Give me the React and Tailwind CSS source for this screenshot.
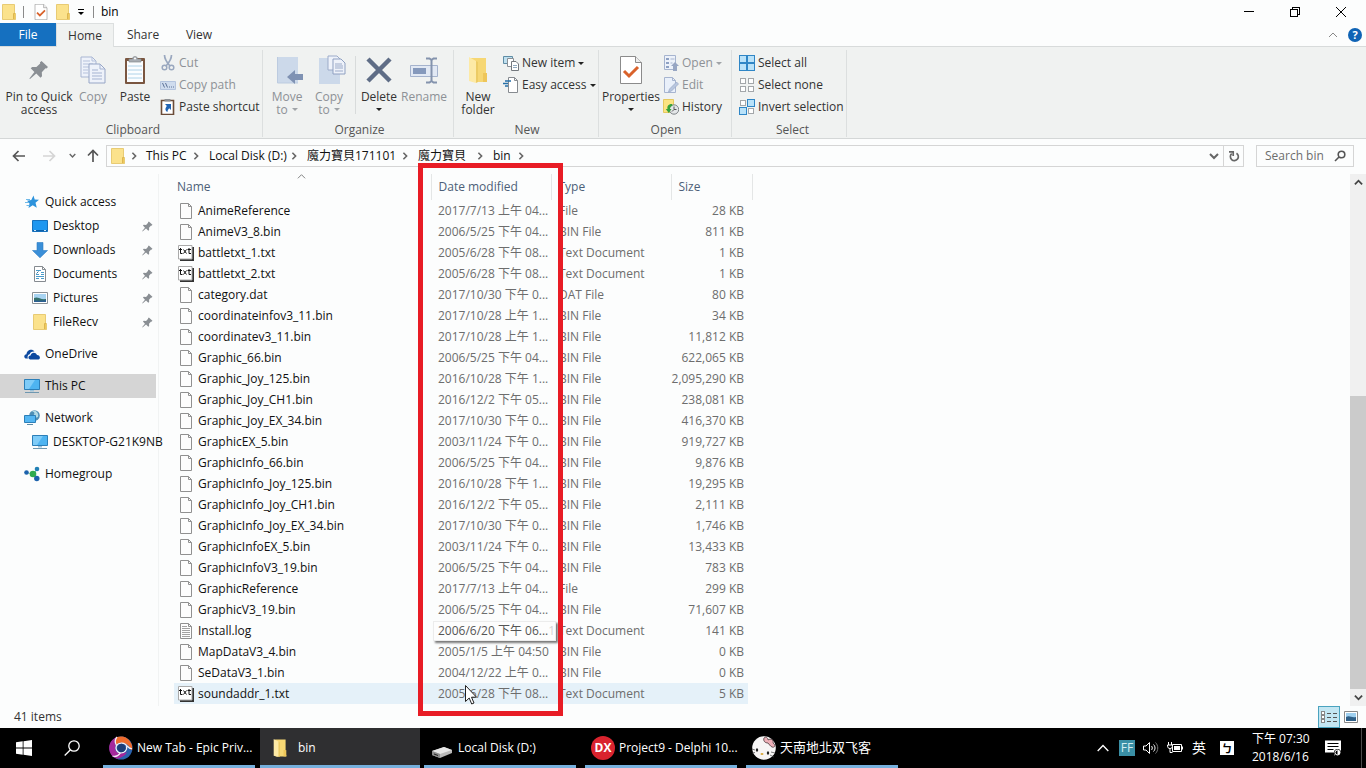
import React from "react";

const FONT = "font-['Open_Sans','Noto_Sans_CJK_TC',sans-serif]";

/* ---------- icons ---------- */

const FolderIcon = ({ className = "w-4 h-4" }) => (
  <svg viewBox="0 0 16 16" className={`shrink-0 ${className}`}>
    <path d="M1.500 .5h12v9h1v6h-13z" fill="#fbe28c" />
    <path d="M12.500 9.500h2v6h-2z" fill="#efc95c" />
    <path d="M1.500 .5h12v9h1v6h-13z" fill="none" stroke="#e8cb74" />
    <path d="M12.500 15v-5.500h1.500" fill="none" stroke="#dcb650" />
  </svg>
);

const OpenFolderIcon = ({ className }) => (
  <svg viewBox="0 0 20 28" className={`shrink-0 ${className}`}>
    <path d="M3 2h15v21l1 1v2H4z" fill="#f6d774" />
    <path d="M15 17h4v9h-4z" fill="#eec65a" />
    <path d="M1 1l7 4v22l-7-2z" fill="#fdeaa6" />
    <path d="M8 5v22l2-1V6z" fill="#eccb64" />
  </svg>
);

const CheckPageIcon = ({ className = "w-4 h-4" }) => (
  <svg viewBox="0 0 22 28" className={`shrink-0 ${className}`}>
    <path d="M.5 .5h15l6 6v21H.5z" fill="#fff" stroke="#8b8b8b" />
    <path d="M15.500 .5v6h6" fill="#eee" stroke="#8b8b8b" />
    <path d="M4 15l5 5L18 11" fill="none" stroke="#d9622b" strokeWidth="3" />
  </svg>
);

const PinIcon = ({ className }) => (
  <svg viewBox="0 0 20 20" className={`shrink-0 ${className}`} fill="#8a8f94">
    <path d="M12.500 1l6.500 6-1.500 1.500-1-.3-3.700 4 .2 4-1.500 1.500-4.200-4.100L1 19l-.600-.600 5-6.300L1.700 8.300 3.200 7l4.200.1 3.800-3.700-.3-1z" />
  </svg>
);

const CopyIcon = ({ className }) => (
  <svg viewBox="0 0 26 28" className={`shrink-0 ${className}`}>
    <path d="M1 1h11l4 4v16H1z" fill="#eef2fa" stroke="#a9b6d2" />
    <path d="M12 1v4h4M3 5h7M3 8h10M3 11h10M3 14h5M3 17h5" stroke="#b5c1db" fill="none" />
    <path d="M9 8h11l5 5v14H9z" fill="#eef2fa" stroke="#97a6c6" />
    <path d="M20 8v5h5M12 14h6M12 17h10M12 20h10M12 23h10" stroke="#a5b3d1" fill="none" />
  </svg>
);

const PasteIcon = ({ className }) => (
  <svg viewBox="0 0 22 30" className={`shrink-0 ${className}`}>
    <rect x="1" y="3" width="20" height="26" rx="1" fill="#7a5640" />
    <rect x="3" y="6" width="16" height="21" fill="#fbfdff" />
    <path d="M4 11h14M4 15h14M4 19h14M4 23h14" stroke="#aed2e8" />
    <path d="M5 7V4h3.500a2.500 2.500 0 0 1 5 0H17v3z" fill="#a8adb3" stroke="#85898e" strokeWidth=".7" />
    <circle cx="11" cy="3.500" r="1" fill="#fff" />
  </svg>
);

const CutIcon = () => (
  <svg viewBox="0 0 16 16" className="w-4 h-4 shrink-0" fill="none" stroke="#9aa8bf">
    <path d="M4.500 0c0 4 1.500 6.500 5.500 11M11.500 0c0 4-1.500 6.500-5.500 11" strokeWidth="1.700" />
    <circle cx="4.500" cy="12.500" r="2.300" strokeWidth="1.500" />
    <circle cx="11.500" cy="12.500" r="2.300" strokeWidth="1.500" />
  </svg>
);

const CopyPathIcon = () => (
  <svg viewBox="0 0 16 16" className="w-4 h-4 shrink-0">
    <path d="M.5 4.500h15v8H.5z" fill="#cfdcee" stroke="#b4c4de" />
    <path d="M2.500 6l2 4.500M5.500 6l2 4.500" stroke="#5d7298" />
    <path d="M9 10h1M11 10h1M13 10h1" stroke="#5d7298" />
  </svg>
);

const PasteShortcutIcon = () => (
  <svg viewBox="0 0 16 16" className="w-4 h-4 shrink-0">
    <path d="M1.500 1.500h12v14h-12z" fill="#fff" stroke="#6b4c38" strokeWidth="1.600" />
    <path d="M4.500 0h6v2.500h-6z" fill="#8c9095" />
    <path d="M5 5h6v6L9.200 9.200C8 10.500 7.500 11.500 7.500 13 4.800 11.500 5 9 6.900 6.900z" fill="#1f64b4" />
  </svg>
);

const MoveToIcon = ({ className }) => (
  <svg viewBox="-3 0 28 30" className={`shrink-0 overflow-visible ${className}`}>
    <path d="M1 2h21v26H1z" fill="#ccd9ea" />
    <path d="M1.500 2v26H22" stroke="#bccbe0" fill="none" />
    <path d="M11 22l8-7v4h8v6h-8v4z" fill="#7f92b3" />
  </svg>
);

const CopyToIcon = ({ className }) => (
  <svg viewBox="-3 0 28 30" className={`shrink-0 overflow-visible ${className}`}>
    <path d="M1 3h21v26H1z" fill="#ccd9ea" />
    <path d="M10 1h9l3 3v11H10z" fill="#eef2fa" stroke="#9cabc9" />
    <path d="M15 4h8l4 4v11H15z" fill="#eef2fa" stroke="#8fa0c1" />
    <path d="M17 9h7M17 11h8M17 13h8M17 16h8" stroke="#9cabc9" />
  </svg>
);

const DeleteIcon = ({ className }) => (
  <svg viewBox="0 0 28 28" className={`shrink-0 ${className}`}>
    <path d="M3 3l22 22M25 3L3 25" stroke="#5f6d86" strokeWidth="4.500" />
  </svg>
);

const RenameIcon = ({ className }) => (
  <svg viewBox="0 0 30 28" className={`shrink-0 ${className}`}>
    <path d="M1.500 9.500h27v11h-27z" fill="#e2e9f4" stroke="#a5b3cd" />
    <path d="M4 12h13v6H4z" fill="#8599bc" />
    <path d="M17 2.500h3.500l2 1.500 2-1.500H28M22.500 4v21M17 26.500h3.500l2-1.500 2 1.500H28" stroke="#8493ad" strokeWidth="2" fill="none" />
  </svg>
);

const NewItemIcon = () => (
  <svg viewBox="0 0 16 16" className="w-4 h-4 shrink-0">
    <path d="M.5 1.500h9v7h-9z" fill="#bfe0ef" stroke="#5f8da5" />
    <path d="M4.500 3.500h6v8h-6z" fill="#fff" stroke="#8a9096" />
    <path d="M8.500 6.500h4.500l2.500 2.500v6.500h-7z" fill="#fff" stroke="#74797e" />
    <path d="M10 10.500h4M10 12.500h4" stroke="#8fa9bd" />
  </svg>
);

const EasyAccessIcon = () => (
  <svg viewBox="0 0 16 16" className="w-4 h-4 shrink-0">
    <path d="M5.500 .5h6l3 3v12h-9z" fill="#fff" stroke="#868b90" />
    <path d="M11.500 .5v3h3" fill="none" stroke="#868b90" />
    <path d="M2 4h6M0 6.500h5M2 9h3" stroke="#246fa8" strokeWidth="1.500" />
  </svg>
);

const OpenIcon = () => (
  <svg viewBox="0 0 16 16" className="w-4 h-4 shrink-0">
    <path d="M1.500 .5h11v14h-11z" fill="#edf2fa" stroke="#a6b4cf" />
    <path d="M3 3h3v2H3zM3 7h3v2H3zM3 11h3v2H3z" fill="#8ea1c3" />
    <path d="M7.500 4h4M7.500 8h2" stroke="#a6b4cf" />
    <path d="M12 7l4 4h-2v5h-4v-5H8z" fill="#97a6c3" />
  </svg>
);

const EditIcon = () => (
  <svg viewBox="0 0 16 16" className="w-4 h-4 shrink-0">
    <path d="M1.500 .5h8l3 3v12h-11z" fill="#e9f0fa" stroke="#a6b4cf" />
    <path d="M9.500 .5v3h3" fill="none" stroke="#a6b4cf" />
    <path d="M13.500 5l2 2-7 7-3 1 1-3z" fill="#b8c6de" stroke="#98a8c5" strokeWidth=".7" />
  </svg>
);

const HistoryIcon = () => (
  <svg viewBox="0 0 16 16" className="w-4 h-4 shrink-0">
    <path d="M.5 .5h10v13H.5z" fill="#fbe382" stroke="#e5c95e" />
    <circle cx="11" cy="10.500" r="4.700" fill="#e3e6e8" stroke="#7e8488" />
    <path d="M11 7.500v3h2.500M9 12.500l2-2" stroke="#555" fill="none" />
    <path d="M9 5C5 5 4 7.500 4.500 10H2.800l3 4 2.700-4H7c0-1.500.5-2.800 2.500-3z" fill="#35a23b" />
  </svg>
);

const SelectIcon = ({ filled }) => (
  <svg viewBox="0 0 16 16" className="w-4 h-4 shrink-0">
    {[[1, 1], [9, 1], [1, 9], [9, 9]].map(([x, y], i) => (
      <rect
        key={i}
        x={x - 0.5 + (filled[i] ? 0 : 1)}
        y={y - 0.5 + (filled[i] ? 0 : 1)}
        width={filled[i] ? 7 : 5}
        height={filled[i] ? 7 : 5}
        fill={filled[i] ? "#b9e2f9" : "#fff"}
        stroke={filled[i] ? "#2f86c6" : "#a3a7aa"}
      />
    ))}
  </svg>
);

const Caret = ({ className = "text-[#222]" }) => (
  <svg viewBox="0 0 6 3" className={`w-[6px] h-[3px] shrink-0 ${className}`}>
    <path d="M0 0h6L3 3z" fill="currentColor" />
  </svg>
);

const Chevron = ({ d, className }) => (
  <svg viewBox="0 0 10 10" className={`shrink-0 ${className}`} fill="none" stroke="currentColor">
    <path d={d} />
  </svg>
);
const RIGHT = "M3 1l4 4-4 4";
const DOWN = "M1 3l4 4 4-4";
const UP = "M1 7l4-4 4 4";

const ArrowIcon = ({ className }) => (
  <svg viewBox="0 0 14 12" className={`w-[14px] h-3 ${className}`} fill="none" stroke="currentColor" strokeWidth="1.700">
    <path d="M13 6H2M6.500 1L1.500 6l5 5" />
  </svg>
);

const StarIcon = () => (
  <svg viewBox="0 0 16 16" className="w-4 h-4 shrink-0">
    <path d="M9.500 1.500l1.200 4 4.300.3-3.500 3 1.300 5-4.100-2.500L4.500 14l1-4.500L3 6.800l4.300-.8z" fill="#2d93dc" />
    <path d="M2 5.500h4M1 8.500h4M2.500 11.500h3" stroke="#6fb9e8" />
  </svg>
);

const DesktopIcon = () => (
  <svg viewBox="0 0 16 16" className="w-4 h-4 shrink-0">
    <path d="M.5 2.500h15v11H.5z" fill="#1e97f0" stroke="#1671bd" />
    <path d="M1 12.500h14" stroke="#0c5fa8" />
    <path d="M2 12.500h2M12 12.500h2" stroke="#cfe8fa" />
  </svg>
);

const DownloadIcon = () => (
  <svg viewBox="0 0 16 16" className="w-4 h-4 shrink-0">
    <path d="M5 .5h6v8h4.500L8 15.800.5 8.500H5z" fill="#3a8fd8" stroke="#2e7cc2" strokeWidth=".6" />
  </svg>
);

const DocumentIcon = () => (
  <svg viewBox="0 0 16 16" className="w-4 h-4 shrink-0">
    <path d="M2.500 .5h8l3 3v12h-11z" fill="#fff" stroke="#858b90" />
    <path d="M10.500 .5v3h3" fill="none" stroke="#858b90" />
    <path d="M4 4.500h5M9 6.500h3M4 8.500h3M9 8.500h3M4 10.500h8M4 12.500h3M9 12.500h3" stroke="#4a9bc9" />
    <path d="M4.500 7.500l2-2" stroke="#3477a2" />
  </svg>
);

const PictureIcon = () => (
  <svg viewBox="0 0 16 16" className="w-4 h-4 shrink-0">
    <path d="M.5 2.500h15v11H.5z" fill="#fff" stroke="#8b9196" />
    <path d="M2 4h12v8H2z" fill="#a8d4f2" />
    <path d="M2 8c4-2 6 2 12 1v3H2z" fill="#35706b" />
    <path d="M2 10.500c4 0 7 .5 12-.5v2H2z" fill="#2c5f93" />
  </svg>
);

const CloudIcon = () => (
  <svg viewBox="0 0 16 16" className="w-4 h-4 shrink-0" fill="#0d4aa0">
    <path d="M1.500 12.500C-.5 11.500 0 8.500 2.500 8.300 2.500 4 8 2 10.500 5.500 8 5 6 6.500 5.700 8.300 3.800 8.500 3 11 4 12.500z" />
    <path d="M6 13.500c-2.300-.5-2-3.800.5-3.900C7 6.500 11.500 5.500 13 9c3 0 4 3.800 1.500 4.500z" />
  </svg>
);

const MonitorIcon = () => (
  <svg viewBox="0 0 16 16" className="w-4 h-4 shrink-0">
    <path d="M.5 1.500h15v10H.5z" fill="#4eb4f1" stroke="#2c7fb8" />
    <path d="M1 2h10L5 11H1z" fill="#7fccf8" />
    <path d="M6 12h4v1.500H6z" fill="#9cc3da" />
    <path d="M1 14.500h14" stroke="#6e97b0" />
  </svg>
);

const NetworkIcon = () => (
  <svg viewBox="0 0 16 16" className="w-4 h-4 shrink-0">
    <circle cx="10.500" cy="5.500" r="5.300" fill="#4f8fb5" />
    <path d="M8 1.500c3 0 3 3 1 4s2 3 5 1.500c1-3-1-6-4-6.500z" fill="#b3dbe6" />
    <path d="M.5 5.500h11v7H.5z" fill="#54b6f2" stroke="#2c7fb8" />
    <path d="M3 14.500h6" stroke="#5d8ba6" />
  </svg>
);

const HomegroupIcon = () => (
  <svg viewBox="0 0 16 16" className="w-4 h-4 shrink-0">
    <path d="M3 7l7 1 3-5M10 8l2 5" stroke="#8cc9b2" fill="none" />
    <circle cx="2.500" cy="6.500" r="2.300" fill="#1c62ac" />
    <circle cx="9" cy="8" r="3.300" fill="#30ab4f" />
    <circle cx="13" cy="3" r="2.300" fill="#2280b5" />
    <circle cx="12.800" cy="12.500" r="2.700" fill="#1c62ac" />
  </svg>
);

const FileIcon = ({ kind }) => {
  if (kind === "txt") {
    return (
      <svg viewBox="0 0 16 16" className="w-4 h-4 shrink-0">
        <path d="M2 15h13V2" stroke="#333" strokeWidth="2" fill="none" />
        <path d="M.5 .5h13.500v13.500H.5z" fill="#fff" stroke="#aaa" />
        <path d="M2.500 3v5.500h2M1 4.500h3M5.500 4.500l3 4M8.500 4.500l-3 4M11 3v5.500h2M9.500 4.500H13" stroke="#111" fill="none" />
      </svg>
    );
  }
  return (
    <svg viewBox="0 0 16 16" className="w-4 h-4 shrink-0">
      <path d="M2.500 .5h8l3 3v12h-11z" fill="#fdfdfd" stroke="#909090" />
      <path d="M10.500 .5v3h3" fill="none" stroke="#909090" />
      {kind === "log" && (
        <path d="M4 3.500h5M4 5.500h8M4 7.500h8M4 9.500h8M4 11.500h8M4 13.500h8" stroke="#a2a2a2" />
      )}
    </svg>
  );
};

/* ---------- data ---------- */

const FILES = [
  ["AnimeReference", "2017/7/13 上午 04...", "File", "28 KB"],
  ["AnimeV3_8.bin", "2006/5/25 下午 04...", "BIN File", "811 KB"],
  ["battletxt_1.txt", "2005/6/28 下午 08...", "Text Document", "1 KB", "txt"],
  ["battletxt_2.txt", "2005/6/28 下午 08...", "Text Document", "1 KB", "txt"],
  ["category.dat", "2017/10/30 下午 0...", "DAT File", "80 KB"],
  ["coordinateinfov3_11.bin", "2017/10/28 上午 1...", "BIN File", "34 KB"],
  ["coordinatev3_11.bin", "2017/10/28 上午 1...", "BIN File", "11,812 KB"],
  ["Graphic_66.bin", "2006/5/25 下午 04...", "BIN File", "622,065 KB"],
  ["Graphic_Joy_125.bin", "2016/10/28 下午 1...", "BIN File", "2,095,290 KB"],
  ["Graphic_Joy_CH1.bin", "2016/12/2 下午 05...", "BIN File", "238,081 KB"],
  ["Graphic_Joy_EX_34.bin", "2017/10/30 下午 0...", "BIN File", "416,370 KB"],
  ["GraphicEX_5.bin", "2003/11/24 下午 0...", "BIN File", "919,727 KB"],
  ["GraphicInfo_66.bin", "2006/5/25 下午 04...", "BIN File", "9,876 KB"],
  ["GraphicInfo_Joy_125.bin", "2016/10/28 下午 1...", "BIN File", "19,295 KB"],
  ["GraphicInfo_Joy_CH1.bin", "2016/12/2 下午 05...", "BIN File", "2,111 KB"],
  ["GraphicInfo_Joy_EX_34.bin", "2017/10/30 下午 0...", "BIN File", "1,746 KB"],
  ["GraphicInfoEX_5.bin", "2003/11/24 下午 0...", "BIN File", "13,433 KB"],
  ["GraphicInfoV3_19.bin", "2006/5/25 下午 04...", "BIN File", "783 KB"],
  ["GraphicReference", "2017/7/13 上午 04...", "File", "299 KB"],
  ["GraphicV3_19.bin", "2006/5/25 下午 04...", "BIN File", "71,607 KB"],
  ["Install.log", "2006/6/20 下午 06...", "Text Document", "141 KB", "log"],
  ["MapDataV3_4.bin", "2005/1/5 上午 04:50", "BIN File", "0 KB"],
  ["SeDataV3_1.bin", "2004/12/22 上午 0...", "BIN File", "0 KB"],
  ["soundaddr_1.txt", "2005/6/28 下午 08...", "Text Document", "5 KB", "txt"],
];

const NAV = [
  [
    { label: "Quick access", icon: StarIcon },
    { label: "Desktop", icon: DesktopIcon, child: true, pinned: true },
    { label: "Downloads", icon: DownloadIcon, child: true, pinned: true },
    { label: "Documents", icon: DocumentIcon, child: true, pinned: true },
    { label: "Pictures", icon: PictureIcon, child: true, pinned: true },
    { label: "FileRecv", icon: FolderIcon, child: true, pinned: true },
  ],
  [{ label: "OneDrive", icon: CloudIcon }],
  [{ label: "This PC", icon: MonitorIcon, active: true }],
  [
    { label: "Network", icon: NetworkIcon },
    { label: "DESKTOP-G21K9NB", icon: MonitorIcon, child: true },
  ],
  [{ label: "Homegroup", icon: HomegroupIcon }],
];

const CRUMBS = [
  ["This PC", "w-[46px]"],
  ["Local Disk (D:)", "w-[81px]"],
  ["魔力寶貝171101", "w-[94px]"],
  ["魔力寶貝", "w-[58px]"],
  ["bin", "w-[24px]"],
];

/* ---------- window chrome ---------- */

const TitleBar = () => (
  <header className="flex h-[23px] items-center">
    <FolderIcon className="w-4 h-4 ml-px" />
    <span className="w-px h-3 bg-[#8a8a8a] ml-[6px]" />
    <button aria-label="Properties" className="ml-[9px]">
      <CheckPageIcon className="w-4 h-4" />
    </button>
    <button aria-label="New folder" className="ml-[6px]">
      <FolderIcon />
    </button>
    <button aria-label="Customize toolbar" className="ml-[6px] flex w-2 flex-col items-center gap-[2px]">
      <span className="h-px w-[6px] bg-black" />
      <Caret className="text-black" />
    </button>
    <span className="w-px h-3 bg-[#8a8a8a] ml-2" />
    <h1 className="ml-[7px]">bin</h1>
    <div className="ml-auto mr-[2px] flex">
      <button aria-label="Minimize" className="flex w-[46px] justify-center">
        <svg viewBox="0 0 12 12" className="w-3 h-3" stroke="#000" shapeRendering="crispEdges">
          <path d="M1 5.500h10" />
        </svg>
      </button>
      <button aria-label="Restore" className="flex w-[46px] justify-center">
        <svg viewBox="0 0 12 12" className="w-3 h-3" stroke="#000" fill="none" shapeRendering="crispEdges">
          <path d="M1.500 3.500h7v7h-7zM3.500 3V1.500h7v7H9" />
        </svg>
      </button>
      <button aria-label="Close" className="flex w-[46px] justify-center">
        <svg viewBox="0 0 12 12" className="w-3 h-3" stroke="#000">
          <path d="M1 1l10 10M11 1L1 11" />
        </svg>
      </button>
    </div>
  </header>
);

const Tabs = () => (
  <nav className="flex h-6 text-[#333]">
    <button className="w-14 bg-[#1570c0] text-white border-b border-[#d8dbdb]">File</button>
    <button className="w-[58px] border-x border-t border-[#dcdfdf] bg-[#f0f2f1]">Home</button>
    <div className="flex grow items-center border-b border-[#d8dbdb]">
      <button className="w-[58px]">Share</button>
      <button className="w-[54px]">View</button>
      <button aria-label="Minimize the Ribbon" className="ml-auto">
        <Chevron d={UP} className="w-[10px] h-[10px] text-[#888]" />
      </button>
      <button
        aria-label="Help"
        className="ml-[10px] mr-1 flex h-[14px] w-[14px] items-center justify-center rounded-full bg-[#0f63b5] text-[11px] font-bold leading-none text-white"
      >
        ?
      </button>
    </div>
  </nav>
);

const BigButton = ({ icon: Icon, iconClass, lines, caret, width, disabled }) => (
  <button
    disabled={disabled}
    className={`flex flex-col items-center pt-1 leading-[13px] ${width} ${disabled ? "text-[#8d9196]" : "text-[#333]"}`}
  >
    <span className="mb-1 flex h-8 items-center justify-center">
      <Icon className={iconClass} />
    </span>
    <span className="whitespace-nowrap">{lines[0]}</span>
    {(lines[1] || caret) && (
      <span className="flex h-[13px] items-center gap-1 whitespace-nowrap">
        {lines[1]}
        {caret && <Caret className={disabled ? "text-[#a0a4a8]" : "text-[#222]"} />}
      </span>
    )}
  </button>
);

const SmallButton = ({ icon, children, caret, disabled }) => (
  <button
    disabled={disabled}
    className={`flex h-[22px] items-center gap-[3px] whitespace-nowrap ${disabled ? "text-[#8d9196]" : "text-[#333]"}`}
  >
    {icon}
    {children}
    {caret && <Caret className={disabled ? "text-[#a0a4a8]" : "text-[#222]"} />}
  </button>
);

const Group = ({ label, width, children }) => (
  <section className={`flex shrink-0 flex-col border-r border-[#dcdfdf] ${width}`}>
    <div className="flex h-[73px]">{children}</div>
    <h2 className="text-center leading-[14px] text-[#555]">{label}</h2>
  </section>
);

const Ribbon = () => (
  <div className="flex h-[92px] border-b border-[#d4d7d7] bg-[#f0f2f1] pb-px pt-[3px]">
    <Group label="Clipboard" width="w-[263px] pl-1">
      <BigButton icon={PinIcon} iconClass="w-5 h-5" lines={["Pin to Quick", "access"]} width="w-[70px]" />
      <BigButton icon={CopyIcon} iconClass="w-[26px] h-[28px]" lines={["Copy"]} width="w-[38px]" disabled />
      <BigButton icon={PasteIcon} iconClass="w-[22px] h-[30px]" lines={["Paste"]} width="w-[46px]" />
      <div className="ml-[2px] mt-[2px]">
        <SmallButton icon={<CutIcon />} disabled>Cut</SmallButton>
        <SmallButton icon={<CopyPathIcon />} disabled>Copy path</SmallButton>
        <SmallButton icon={<PasteShortcutIcon />}>Paste shortcut</SmallButton>
      </div>
    </Group>
    <Group label="Organize" width="w-[191px] pl-[3px]">
      <BigButton icon={MoveToIcon} iconClass="w-[28px] h-[30px]" lines={["Move", "to"]} caret width="w-[42px]" disabled />
      <BigButton icon={CopyToIcon} iconClass="w-[28px] h-[30px]" lines={["Copy", "to"]} caret width="w-[42px]" disabled />
      <span className="ml-[5px] mt-[6px] h-[58px] w-px bg-[#d8dbdb]" />
      <BigButton icon={DeleteIcon} iconClass="w-[28px] h-[28px]" lines={["Delete"]} caret width="w-[46px]" />
      <BigButton icon={RenameIcon} iconClass="w-[30px] h-[28px]" lines={["Rename"]} width="w-[44px]" disabled />
    </Group>
    <Group label="New" width="w-[145px] pl-[2px]">
      <BigButton icon={OpenFolderIcon} iconClass="w-5 h-7" lines={["New", "folder"]} width="w-[44px]" />
      <div className="ml-[3px] mt-[2px]">
        <SmallButton icon={<NewItemIcon />} caret>New item</SmallButton>
        <SmallButton icon={<EasyAccessIcon />} caret>Easy access</SmallButton>
      </div>
    </Group>
    <Group label="Open" width="w-[133px] pl-[2px]">
      <BigButton icon={CheckPageIcon} iconClass="w-[22px] h-[28px]" lines={["Properties"]} caret width="w-[60px]" />
      <div className="ml-[2px] mt-[2px]">
        <SmallButton icon={<OpenIcon />} caret disabled>Open</SmallButton>
        <SmallButton icon={<EditIcon />} disabled>Edit</SmallButton>
        <SmallButton icon={<HistoryIcon />}>History</SmallButton>
      </div>
    </Group>
    <Group label="Select" width="w-[115px] pl-[7px]">
      <div className="mt-[2px]">
        <SmallButton icon={<SelectIcon filled={[1, 1, 1, 1]} />}>Select all</SmallButton>
        <SmallButton icon={<SelectIcon filled={[0, 0, 0, 0]} />}>Select none</SmallButton>
        <SmallButton icon={<SelectIcon filled={[0, 1, 1, 0]} />}>Invert selection</SmallButton>
      </div>
    </Group>
  </div>
);

const AddressBar = () => (
  <div className="flex h-[35px] items-center px-3 pb-[2px]">
    <button aria-label="Back" className="text-[#555]"><ArrowIcon /></button>
    <button aria-label="Forward" disabled className="ml-4 text-[#d5d5d5]"><ArrowIcon className="rotate-180" /></button>
    <button aria-label="Recent locations" className="ml-[13px] text-[#666]">
      <Chevron d={DOWN} className="h-[7px] w-[7px] stroke-2" />
    </button>
    <button aria-label="Up" className="ml-[10px] text-[#555]"><ArrowIcon className="rotate-90" /></button>
    <div className="ml-[6px] flex h-[22px] grow items-center border border-[#d5d5d5] pl-[3px]">
      <FolderIcon />
      <Chevron d={RIGHT} className="ml-1 mr-2 h-2 w-2 stroke-2 text-[#666]" />
      {CRUMBS.map(([label, width]) => (
        <React.Fragment key={label}>
          <button className={`whitespace-nowrap text-left text-[#111] ${width}`}>{label}</button>
          <Chevron d={RIGHT} className="mr-[9px] h-2 w-2 stroke-2 text-[#666]" />
        </React.Fragment>
      ))}
      <button aria-label="Previous locations" className="ml-auto mr-1 text-[#666]">
        <Chevron d={DOWN} className="h-[10px] w-[10px] stroke-2" />
      </button>
      <button aria-label="Refresh" className="flex h-full w-5 items-center justify-center border-l border-[#d5d5d5]">
        <svg viewBox="0 0 12 12" className="h-3 w-3" fill="none" stroke="#666" strokeWidth="1.700">
          <path d="M8.500 3.200A4 4 0 1 1 3.700 3.600" />
          <path d="M1 1.800h4.200V6" />
        </svg>
      </button>
    </div>
    <label className="ml-3 flex h-[22px] w-[98px] items-center border border-[#d5d5d5] pl-2 pr-[7px]">
      <input
        type="text"
        aria-label="Search bin"
        placeholder="Search bin"
        className="w-full min-w-0 bg-transparent outline-none placeholder:text-[#6d6d6d]"
      />
      <svg viewBox="0 0 12 12" className="h-3 w-3 shrink-0" fill="none" stroke="#555" strokeWidth="1.600">
        <circle cx="7.500" cy="4.500" r="3.300" />
        <path d="M5 7L1 11" />
      </svg>
    </label>
  </div>
);

/* ---------- body ---------- */

const Sidebar = () => (
  <aside className="flex w-[159px] shrink-0 flex-col gap-2 border-r border-[#f1f3f3] pt-4">
    {NAV.map((group) => (
      <ul key={group[0].label}>
        {group.map(({ label, icon: Icon, child, pinned, active }) => (
          <li key={label}>
            <a
              href="#"
              className={`mr-[2px] flex h-6 items-center gap-[5px] whitespace-nowrap text-[#111] ${
                child ? "pl-8" : "pl-6"
              } ${active ? "bg-[#d5d5d5]" : ""}`}
            >
              <Icon />
              {label}
              {pinned && <PinIcon className="ml-auto mr-[3px] h-[11px] w-[11px]" />}
            </a>
          </li>
        ))}
      </ul>
    ))}
  </aside>
);

const Tooltip = () => (
  <span className="absolute left-[2px] top-px flex h-[20px] w-[123px] items-center overflow-hidden border border-[#ececec] bg-[#fdfdfd] pl-1 text-[#555] shadow-[2px_2px_2px_#777]">
    2006/6/20 下午 06...<span className="text-[#d5d5d5]">17</span>
  </span>
);

const Cursor = () => (
  <svg viewBox="0 0 12 20" className="absolute left-[34px] top-[2px] z-20 h-5 w-3">
    <path d="M.5 .5v16l3.700-3.500 2.500 6 2.300-1-2.500-5.800h5z" fill="#fff" stroke="#222" />
  </svg>
);

const FileTable = () => (
  <div className="relative min-w-0 grow pl-[15px]">
    <Chevron d={UP} className="absolute left-[138px] top-[-2px] h-[9px] w-[9px] text-[#777]" />
    <table className="w-[578px] table-fixed border-collapse">
      <colgroup>
        <col className="w-[257px]" />
        <col className="w-[120px]" />
        <col className="w-[120px]" />
        <col className="w-[77px]" />
        <col className="w-[4px]" />
      </colgroup>
      <thead>
        <tr className="h-[26px] text-left text-[#4c5f78] [&>th]:font-normal">
          <th className="border-r border-[#e4e6e6] pl-[3px]">Name</th>
          <th className="border-r border-[#e4e6e6] pl-[7px]">Date modified</th>
          <th className="border-r border-[#e4e6e6] pl-[7px]">Type</th>
          <th className="pl-[7px]">Size</th>
          <th className="border-r border-[#e4e6e6]" aria-hidden="true" />
        </tr>
      </thead>
      <tbody>
        {FILES.map(([name, date, type, size, kind]) => {
          const hovered = name === "soundaddr_1.txt";
          const cell = hovered ? "bg-[#e5f1f9]" : "";
          return (
            <tr key={name} className="h-[21px] whitespace-nowrap leading-[20px] text-[#6d6d6d] [&>td]:py-0">
              <td className={`pl-1 ${cell}`}>
                <span className="flex items-center gap-1 text-[#111]">
                  <FileIcon kind={kind} />
                  {name}
                </span>
              </td>
              <td className={`relative pl-[7px] ${cell}`}>
                {kind === "log" ? <Tooltip /> : date}
                {hovered && <Cursor />}
              </td>
              <td className={`pl-2 ${cell}`}>{type}</td>
              <td className={`pr-1 text-right ${cell}`}>{size}</td>
              <td />
            </tr>
          );
        })}
      </tbody>
    </table>
    <div className="pointer-events-none absolute left-[259px] top-[-11px] z-10 h-[553px] w-[145px] border-[5px] border-[#e81c25]" />
  </div>
);

const Scrollbar = () => (
  <div className="flex w-4 shrink-0 flex-col items-center bg-[#f0f0f0] text-[#444]">
    <button aria-label="Scroll up" className="flex h-[17px] items-center">
      <Chevron d={UP} className="h-[9px] w-[9px] stroke-2" />
    </button>
    <div className="grow-[205]" />
    <div className="w-full grow-[292] bg-[#cbcbcb]" />
    <button aria-label="Scroll down" className="flex h-[17px] items-center">
      <Chevron d={DOWN} className="h-[9px] w-[9px] stroke-2" />
    </button>
  </div>
);

const StatusBar = () => (
  <footer className="flex h-[22px] items-center pl-[14px] text-[#333]">
    41 items
    <button aria-label="Details view" className="ml-auto flex h-[22px] w-[22px] items-center justify-center border border-[#4aa3bf] bg-[#c3e6f2]">
      <svg viewBox="0 0 16 14" className="h-[14px] w-4" fill="none" shapeRendering="crispEdges">
        <path d="M.5 1.500h3v3h-3zM.5 5.500h3v3h-3zM.5 9.500h3v3h-3z" fill="#fff" stroke="#888" />
        <path d="M6 3.500h4M12 3.500h4M6 7.500h4M12 7.500h4M6 11.500h4M12 11.500h4" stroke="#555" />
      </svg>
    </button>
    <button aria-label="Large icons view" className="ml-1 mr-2">
      <svg viewBox="0 0 14 12" className="h-3 w-[14px]">
        <path d="M.5 .5h13v11H.5z" fill="#fff" stroke="#888" />
        <path d="M2 2h10v8H2z" fill="#9fd0f0" />
        <path d="M2 6c4-2 5 1 10 0v4H2z" fill="#2e5f87" />
      </svg>
    </button>
  </footer>
);

/* ---------- taskbar ---------- */

const EpicIcon = () => (
  <svg viewBox="0 0 24 24" className="h-6 w-6 shrink-0">
    <circle cx="12" cy="12" r="11.500" fill="#2a62ad" />
    <path d="M8 1A11.500 11.500 0 0 1 23 14c-1 1-2-5-7-6.500C12 6 9 7 7 9 6 6 6 3 8 1z" fill="#ee6b2d" />
    <path d="M8 1C5 4 6 8 7 9c-2 4 0 8 4 8 3 .5 5 0 7-1-2 4-6 6-10 6.800C-2 20-3 5 8 1z" fill="#a5289c" />
    <path d="M8 1c-2.500 3-2 6-.5 8.500M7.500 9.500C10 6 16 6.500 18 10c2 2 3.500 3 5 2.500M17.500 10c1 4-2 7-6 6.800M7.500 9.500c-1.500 3.500.5 7 4 7.300C9 20 6 21 3.500 20" stroke="#f3eef6" strokeWidth="1.300" fill="none" />
    <circle cx="12.400" cy="12" r="4.200" fill="#1d3d78" />
  </svg>
);

const DriveIcon = () => (
  <svg viewBox="0 0 22 14" className="mt-2 h-[14px] w-[22px] shrink-0">
    <path d="M1 6l12-4 8 3v3L9 13 1 10z" fill="#b9b9b9" />
    <path d="M1 6l12-4 8 3L9 9z" fill="#e6e6e6" />
    <path d="M1 6l8 3v4L1 10z" fill="#8d8d8d" />
    <path d="M3 8.500l4 1.500v1L3 9.500z" fill="#222" />
  </svg>
);

const DelphiIcon = () => (
  <span className="flex h-6 w-6 shrink-0 items-center justify-center rounded-full bg-[#d9232e] font-bold leading-none">
    DX
  </span>
);

const KittyIcon = () => (
  <svg viewBox="0 0 24 24" className="h-6 w-6 shrink-0">
    <circle cx="12" cy="12" r="11.800" fill="#f7f5f5" />
    <path d="M12 2c2-2 4 0 4 2 3-2 6 0 5 3 3 2 2 5-1 4-2-1-3-3-4-4-3 0-5-2-4-5z" fill="#eeb0b8" stroke="#4a3a3c" strokeWidth=".8" />
    <ellipse cx="5" cy="14" rx="1.200" ry="1.700" fill="#222" />
    <ellipse cx="16" cy="17" rx="1.200" ry="1.700" fill="#222" />
    <ellipse cx="10" cy="18" rx="1.500" ry="1" fill="#d8a83c" />
    <path d="M0 13l3 1M0 17l3-.5M18 19l4 2M19 16l4 1" stroke="#444" strokeWidth=".7" />
  </svg>
);

const TASKS = [
  { label: "New Tab - Epic Priv...", icon: <EpicIcon />, box: "w-[152px] pl-[6px] gap-1 mr-[5px]" },
  {
    label: "bin",
    icon: <OpenFolderIcon className="h-5 w-[14px]" />,
    box: "w-[160px] pl-[13px] gap-[11px] mr-1 bg-[#2f2f31]",
  },
  { label: "Local Disk (D:)", icon: <DriveIcon />, box: "w-[152px] pl-[7px] gap-[5px] mr-[9px]" },
  { label: "Project9 - Delphi 10...", icon: <DelphiIcon />, box: "w-[152px] pl-[6px] gap-1 mr-[9px]" },
  { label: "天南地北双飞客", icon: <KittyIcon />, box: "w-[152px] pl-[6px] gap-1 text-[13px]" },
];

const Tray = () => (
  <div className="ml-auto flex items-center">
    <button aria-label="Show hidden icons">
      <svg viewBox="0 0 12 8" className="h-2 w-3" fill="none" stroke="#fff" strokeWidth="1.300">
        <path d="M.7 7L6 1.500 11.300 7" />
      </svg>
    </button>
    <span className="ml-[10px] flex h-4 w-4 items-center justify-center bg-[#3a8fa5] leading-none text-[#d5eef2]">FF</span>
    <svg viewBox="0 0 16 14" className="ml-2 h-[14px] w-4" fill="none" stroke="#fff">
      <path d="M.5 5h2.500L6.500 1.500v11L3 9H.5z" />
      <path d="M8.500 5c1 1 1 3 0 4M10.500 3.500c2 2 2 5 0 7" />
      <path d="M12.500 1.500c3 3 3 8 0 11" stroke="#777" />
    </svg>
    <svg viewBox="0 0 16 14" className="ml-2 h-[14px] w-4" fill="none" stroke="#fff">
      <path d="M5.500 3.500h9v7h-9z" />
      <path d="M7 5h6v4H7zM15 5.500h1v3h-1z" fill="#fff" stroke="none" />
      <path d="M1.500 1v3M4.500 1v3M.5 4h5c0 3-1 3.500-2.500 3.500S.5 7 .5 4zM3 7.500v4h2.500" fill="#000" />
    </svg>
    <span className="ml-[9px] text-sm leading-none">英</span>
    <span className="ml-[14px] flex h-[14px] w-[14px] items-center justify-center bg-white text-[11px] font-bold leading-none text-black">ㄅ</span>
    <time className="ml-[18px] w-[56px] whitespace-nowrap text-center leading-[18px]">
      下午 07:30
      <br />
      2018/6/16
    </time>
    <button aria-label="Notifications" className="ml-[17px]">
      <svg viewBox="0 0 16 16" className="h-4 w-4">
        <path d="M0 .5h16v12h-5L9 16v-3.500H0z" fill="#fff" />
        <path d="M2.500 3.500h11M2.500 6.500h11M2.500 9.500h6" stroke="#000" />
        <circle cx="12.500" cy="12.500" r="3.500" fill="#000" />
        <circle cx="12.500" cy="12.500" r="2.500" fill="none" stroke="#fff" />
        <path d="M12.500 10a2.500 2.500 0 0 1 0 5z" fill="#fff" />
      </svg>
    </button>
    <span className="ml-5 mr-1 h-10 w-px bg-[#4a4a4a]" />
  </div>
);

const Taskbar = () => (
  <div className="flex h-10 items-center bg-black text-white">
    <button aria-label="Start" className="ml-4">
      <svg viewBox="0 0 16 16" className="h-4 w-4" fill="#fff">
        <path d="M0 2.300l6.700-1v6.300H0zM7.500 1.200L16 0v7.600H7.500zM0 8.400h6.700v6.300L0 13.700zM7.500 8.400H16V16l-8.500-1.200z" />
      </svg>
    </button>
    <button aria-label="Search" className="ml-8">
      <svg viewBox="0 0 16 16" className="h-4 w-4" fill="none" stroke="#fff" strokeWidth="1.300">
        <circle cx="10" cy="6" r="5.200" />
        <path d="M6.500 9.700L.7 15.500" />
      </svg>
    </button>
    <div className="ml-[23px] flex h-10">
      {TASKS.map(({ label, icon, box }) => (
        <button
          key={label}
          className={`flex items-center whitespace-nowrap border-b-[3px] border-[#76b0dd] pt-[3px] ${box}`}
        >
          {icon}
          {label}
        </button>
      ))}
    </div>
    <Tray />
  </div>
);

const App = () => (
  <div className={`flex min-h-screen flex-col bg-[#fcfdfd] text-xs text-black ${FONT}`}>
    <TitleBar />
    <Tabs />
    <Ribbon />
    <AddressBar />
    <main className="flex grow">
      <Sidebar />
      <FileTable />
      <Scrollbar />
    </main>
    <StatusBar />
    <Taskbar />
  </div>
);

export default App;
